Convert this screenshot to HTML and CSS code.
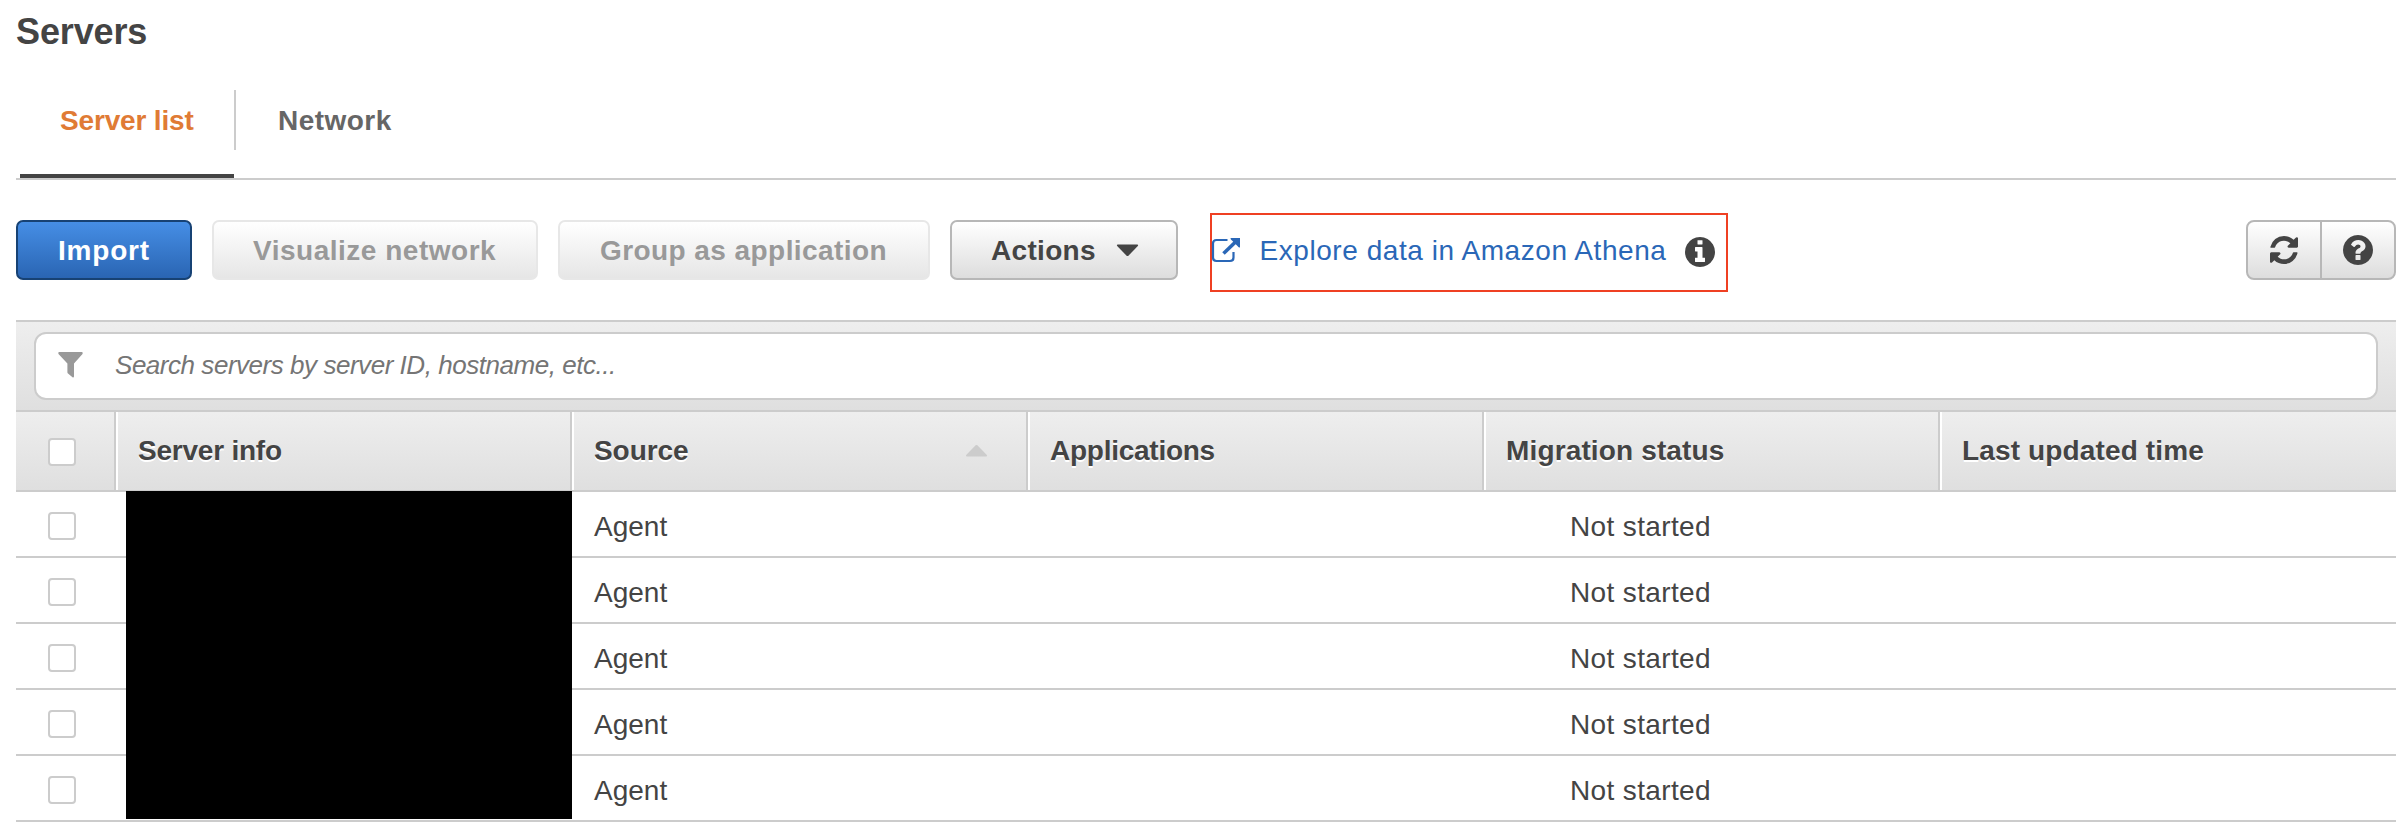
FILE: index.html
```html
<!DOCTYPE html>
<html lang="en">
<head>
<meta charset="utf-8">
<title>Servers</title>
<link rel="stylesheet" href="styles.css">
</head>
<body>
<main class="page">
  <h1 class="title">Servers</h1>

  <nav class="tabs">
    <a class="tab tab-active"><span class="tab-label">Server list</span></a>
    <a class="tab"><span class="tab-label">Network</span></a>
  </nav>

  <div class="toolbar">
    <button class="btn btn-primary">Import</button>
    <button class="btn btn-disabled btn-visualize">Visualize network</button>
    <button class="btn btn-disabled btn-group">Group as application</button>
    <button class="btn btn-actions">Actions
      <svg class="caret" viewBox="0 0 24 14"><path d="M1.5 .5h21q1.5 .3 .6 1.6L13 12.6q-1 .9-2 0L.9 2.1Q0 .8 1.5 .5z"/></svg>
    </button>
    <div class="athena">
      <svg class="icon-external" viewBox="0 0 30 26"><path class="line" d="M15.500 3H4.500Q1 3 1 6.500V20.500Q1 24 4.500 24H18Q21.500 24 21.500 20.500V15"/><path class="line stem" d="M11.500 16.500L24 4.500"/><path class="solid" d="M18.500 1H28V10.500Q26.500 10.500 25.500 9L20 3.500Q18.500 2.500 18.500 1z"/></svg>
      <a class="athena-link">Explore data in Amazon Athena</a>
      <svg class="icon-info" viewBox="128 128 1536 1536"><path d="M1152 1376v-160q0-14-9-23t-23-9h-96V672q0-14-9-23t-23-9H672q-14 0-23 9t-9 23v160q0 14 9 23t23 9h96v320h-96q-14 0-23 9t-9 23v160q0 14 9 23t23 9h448q14 0 23-9t9-23zm-128-896V320q0-14-9-23t-23-9H800q-14 0-23 9t-9 23v160q0 14 9 23t23 9h192q14 0 23-9t9-23zm640 416q0 209-103 385.500T1281.500 1561 896 1664t-385.500-103T231 1281.500 128 896t103-385.500T510.500 231 896 128t385.500 103T1561 510.500 1664 896z"/></svg>
    </div>
    <div class="tools">
      <button class="tool"><svg class="icon-refresh" viewBox="128 128 1536 1536"><path d="M1639 1056q0 5-1 7-64 268-268 434.500T892 1664q-146 0-282.500-55T366 1452l-129 129q-19 19-45 19t-45-19-19-45v-448q0-26 19-45t45-19h448q26 0 45 19t19 45-19 45l-137 137q71 66 161 102t187 36q134 0 250-65t186-179q11-17 53-117 8-23 30-23h192q13 0 22.500 9.500t9.500 22.500zm25-800v448q0 26-19 45t-45 19h-448q-26 0-45-19t-19-45 19-45l138-138Q1067 384 896 384q-134 0-250 65T460 628q-11 17-53 117-8 23-30 23H178q-13 0-22.500-9.500T146 736v-7q65-268 270-434.500T896 128q146 0 284 55.500T1425 340l130-129q19-19 45-19t45 19 19 45z"/></svg></button>
      <button class="tool"><svg class="icon-help" viewBox="128 128 1536 1536"><path d="M1024 1376v-192q0-14-9-23t-23-9H800q-14 0-23 9t-9 23v192q0 14 9 23t23 9h192q14 0 23-9t9-23zm256-672q0-88-55.500-163t-138.500-116-170-41q-243 0-371 213-15 24 8 42l132 100q7 6 19 6 16 0 25-12 53-68 86-92 34-24 86-24 48 0 85.500 26t37.500 59q0 38-20 61t-68 45q-63 28-115.500 86.500T768 1020v36q0 14 9 23t23 9h192q14 0 23-9t9-23q0-19 21.500-49.500T1100 957q32-18 49-28.500t46-35 44.500-48 28-60.500 12.500-81zm384 192q0 209-103 385.500T1281.500 1561 896 1664t-385.500-103T231 1281.500 128 896t103-385.500T510.500 231 896 128t385.500 103T1561 510.500 1664 896z"/></svg></button>
    </div>
  </div>

  <section class="panel">
    <div class="search-bar">
      <div class="search">
        <svg class="icon-filter" viewBox="0 0 25 26"><path d="M1 0H24Q25.300 .6 24.500 2L16 11.500V24.500Q15.700 26 14.500 25.300L10 21.500Q9.400 21 9.400 20V11.500L.5 2Q-.3 .6 1 0z"/></svg>
        <span class="placeholder">Search servers by server ID, hostname, etc...</span>
      </div>
    </div>
    <div class="grid head">
      <div class="check-cell"><span class="checkbox"></span></div>
      <div class="th"><span class="th-info">Server info</span></div>
      <div class="th"><span class="th-source">Source</span><svg class="sort" viewBox="0 0 24 14"><path d="M1.500 13.500h21q1.500-.3 .6-1.600L13 1.400q-1-.9-2 0L.9 11.900Q0 13.200 1.500 13.500z"/></svg></div>
      <div class="th"><span class="th-apps">Applications</span></div>
      <div class="th"><span class="th-wide">Migration status</span></div>
      <div class="th"><span class="th-wide">Last updated time</span></div>
    </div>
    <div class="rows">
      <div class="grid row"><div class="check-cell"><span class="checkbox"></span></div><div></div><div class="td">Agent</div><div></div><div class="td status">Not started</div><div></div></div>
      <div class="grid row"><div class="check-cell"><span class="checkbox"></span></div><div></div><div class="td">Agent</div><div></div><div class="td status">Not started</div><div></div></div>
      <div class="grid row"><div class="check-cell"><span class="checkbox"></span></div><div></div><div class="td">Agent</div><div></div><div class="td status">Not started</div><div></div></div>
      <div class="grid row"><div class="check-cell"><span class="checkbox"></span></div><div></div><div class="td">Agent</div><div></div><div class="td status">Not started</div><div></div></div>
      <div class="grid row"><div class="check-cell"><span class="checkbox"></span></div><div></div><div class="td">Agent</div><div></div><div class="td status">Not started</div><div></div></div>
      <div class="redaction"></div>
    </div>
  </section>
</main>
</body>
</html>
```
FILE: styles.css
```css
* { box-sizing: border-box; }

body {
  margin: 0;
  background: #fff;
  color: #444;
  font-family: "Liberation Sans", Arial, sans-serif;
  font-size: 28px;
}

svg { display: block; flex: none; fill: #444; overflow: visible; }

.page { height: 826px; padding: 0 8px 0 16px; overflow: hidden; }

.title {
  margin: 0;
  height: 90px;
  font-size: 36px;
  line-height: 63px;
  letter-spacing: -0.13px;
}

/* Tabs */
.tabs {
  display: flex;
  height: 90px;
  padding-left: 4px;
  border-bottom: 2px solid #ccc;
}
.tab { height: 88px; color: #666; font-weight: bold; }
.tab-label {
  display: block;
  height: 60px;
  padding-left: 42px;
  line-height: 62px;
  letter-spacing: 0.47px;
}
.tab-active { width: 216px; color: #e07b35; }
.tab-active .tab-label {
  padding-left: 40px;
  border-right: 2px solid #ccc;
  letter-spacing: -0.16px;
}
.tab-active::after {
  content: "";
  display: block;
  width: 214px;
  height: 4px;
  margin-top: 24px;
  background: #444;
}

/* Toolbar */
.toolbar { display: flex; align-items: flex-start; height: 140px; padding-top: 40px; }

.btn, .tool {
  display: flex;
  align-items: center;
  height: 60px;
  margin: 0 20px 0 0;
  padding: 1px 0 0 39px;
  border: 2px solid #b7b7b7;
  border-radius: 7px;
  background: linear-gradient(#fff, #ddd);
  color: #444;
  font: bold 28px/56px "Liberation Sans", Arial, sans-serif;
  white-space: nowrap;
}
.btn-primary {
  width: 176px;
  padding-left: 40px;
  border-color: #174274;
  background: linear-gradient(#468ee5, #2a65b3);
  color: #fff;
  letter-spacing: 0.8px;
}
.btn-disabled { border-color: #e7e7e7; background: linear-gradient(#fff, #e6e6e6); color: #999; }
.btn-visualize { width: 326px; letter-spacing: 0.51px; }
.btn-group { width: 372px; padding-left: 40px; letter-spacing: 0.43px; }
.btn-actions { width: 228px; margin-right: 32px; letter-spacing: 0.32px; }
.caret { width: 23px; height: 13px; margin-left: 20px; }

.athena {
  display: flex;
  align-items: center;
  width: 518px;
  height: 79px;
  margin-top: -7px;
  padding-bottom: 4px;
  border: 2px solid #ef4023;
}
.icon-external { width: 30px; height: 26px; margin-bottom: 1px; }
.icon-external path { fill: none; stroke: #2a67b7; stroke-width: 2.2; }
.icon-external .stem { stroke-width: 3.6; }
.icon-external .solid { fill: #2a67b7; stroke: none; }
.athena-link { width: 426px; padding-left: 17.500px; color: #2a67b7; letter-spacing: 0.56px; white-space: nowrap; }
.icon-info { width: 30px; height: 30px; margin: 3px 0 0 17px; }

.tools { display: flex; margin-left: auto; }
.tool { justify-content: center; width: 76px; margin: 0; padding: 0; border-radius: 8px 0 0 8px; }
.tool + .tool { margin-left: -2px; border-radius: 0 8px 8px 0; }
.icon-refresh { width: 28px; height: 28px; }
.icon-help { width: 30px; height: 30px; }

/* Server table */
.search-bar {
  height: 92px;
  padding: 10px 18px;
  border: solid #ccc;
  border-width: 2px 0;
  background: linear-gradient(#eee, #dfdfdf);
}
.search {
  display: flex;
  align-items: center;
  height: 68px;
  padding-left: 22px;
  border: 2px solid #ccc;
  border-radius: 12px;
  background: #fff;
}
.icon-filter { width: 25px; height: 26px; margin-bottom: 2px; fill: #999; }
.placeholder {
  margin: 0 0 1px 32px;
  color: #757575;
  font-size: 26px;
  font-style: italic;
  letter-spacing: -0.464px;
}

.grid { display: grid; grid-template-columns: 100px repeat(5, 456px); }
.check-cell { display: flex; padding-left: 32px; }
.checkbox {
  width: 28px;
  height: 28px;
  margin-top: 20px;
  border: 2px solid #ccc;
  border-radius: 4px;
  background: #fff;
}

.head {
  height: 80px;
  border-bottom: 2px solid #ccc;
  background: linear-gradient(#eee, #dfdfdf);
}
.head .check-cell { border-right: 2px solid #ccc; }
.head .checkbox { margin-top: 26px; }
.th {
  display: flex;
  align-items: center;
  justify-content: space-between;
  padding: 0 38px 0 20px;
  border-left: 2px solid #fff;
  border-right: 2px solid #ccc;
  font-weight: bold;
  line-height: 78px;
  text-shadow: 0 2px 0 #fff;
  white-space: nowrap;
}
.th:last-child { border-right: 0; }
.th-info { letter-spacing: -0.22px; }
.th-source { letter-spacing: -0.07px; }
.th-apps { letter-spacing: -0.26px; }
.th-wide { letter-spacing: 0.14px; }
.sort { width: 23px; height: 13px; margin-bottom: 1px; fill: #ccc; }

.rows { position: relative; }
.row { height: 66px; border-bottom: 2px solid #ccc; }
.td { padding-left: 22px; line-height: 70px; height: 64px; }
.status { padding-left: 86px; letter-spacing: 0.36px; }

/* Black block laid over the server info cells */
.redaction {
  position: absolute;
  top: -1px;
  left: 110px;
  width: 446px;
  height: 328px;
  background: #000;
}
```
